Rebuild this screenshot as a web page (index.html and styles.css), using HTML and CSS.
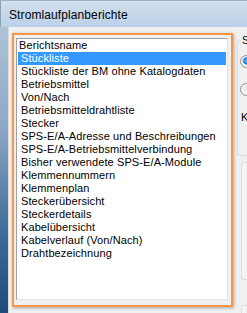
FILE: index.html
```html
<!DOCTYPE html>
<html>
<head>
<meta charset="utf-8">
<link rel="stylesheet" href="styles.css">
</head>
<body>
<div class="window">
  <div class="titlebar">Stromlaufplanberichte</div>
  <div class="client">
    <div class="highlight">
      <div class="listbox">
        <div class="header">Berichtsname</div>
        <ul class="items">
          <li class="selected">Stückliste</li>
          <li>Stückliste der BM ohne Katalogdaten</li>
          <li>Betriebsmittel</li>
          <li>Von/Nach</li>
          <li>Betriebsmitteldrahtliste</li>
          <li>Stecker</li>
          <li>SPS-E/A-Adresse und Beschreibungen</li>
          <li>SPS-E/A-Betriebsmittelverbindung</li>
          <li>Bisher verwendete SPS-E/A-Module</li>
          <li>Klemmennummern</li>
          <li>Klemmenplan</li>
          <li>Steckerübersicht</li>
          <li>Steckerdetails</li>
          <li>Kabelübersicht</li>
          <li>Kabelverlauf (Von/Nach)</li>
          <li>Drahtbezeichnung</li>
        </ul>
      </div>
    </div>
    <div class="side">
      <div class="group">
        <span class="legend">S</span>
        <span class="radio checked"></span>
        <span class="radio"></span>
        <span class="label">K</span>
      </div>
      <div class="box"></div>
      <div class="box"></div>
    </div>
  </div>
</div>
</body>
</html>
```

FILE: styles.css
```css
* { box-sizing: border-box; }
html, body { margin: 0; padding: 0; }
body {
  width: 247px;
  height: 313px;
  overflow: hidden;
  font-family: "Liberation Sans", Arial, sans-serif;
}
.window {
  width: 247px;
  height: 313px;
  display: flex;
  flex-direction: column;
  background: linear-gradient(to bottom, #b9c9da 0%, #8fa9c5 40%, #3d6a96 75%, #1f4b78 100%);
}
.titlebar {
  height: 27px;
  padding: 8px 0 0 8px;
  font-size: 12px;
  line-height: 13px;
  letter-spacing: 0.1px;
  color: #000;
  background: linear-gradient(to bottom, #d3e0ee 0%, #c3d6ea 60%, #bcd1e8 100%);
  border-top: 1px solid #9fb1c4;
  border-left: 1px solid #8ea2b6;
}
.client {
  flex: 1;
  margin-left: 8px;
  background: #f0f0f0;
  display: flex;
  align-items: flex-start;
  padding: 6px 0 0 3px;
  border-left: 1px solid #d9dde3;
  overflow: hidden;
}
.highlight {
  flex: none;
  width: 221px;
  height: 274px;
  border: 2px solid #f79646;
  padding: 3px 0 0 2px;
  box-shadow: 1px 1px 3px rgba(0,0,0,0.3);
}
.listbox {
  width: 212px;
  height: 262px;
  border: 1px solid #a0a0a0;
  border-right-color: #e3e3e3;
  border-bottom-color: #e3e3e3;
  background: #fff;
  font-size: 11px;
  line-height: 13px;
  letter-spacing: 0.1px;
  color: #000;
  padding: 0 1px;
}
.header {
  height: 13px;
  padding-left: 1px;
}
.items {
  list-style: none;
  margin: 0;
  padding: 0;
}
.items li {
  height: 13px;
  padding-left: 3px;
  white-space: nowrap;
}
.items li.selected {
  background: #3399ff;
  color: #fff;
}
.side {
  flex: 1;
  display: flex;
  flex-direction: column;
  padding: 7px 0 0 4px;
}
.group {
  position: relative;
  height: 116px;
  border: 1px solid #d5dfe5;
  border-right: none;
  border-radius: 3px 0 0 3px;
  display: flex;
  flex-direction: column;
  padding: 14px 0 0 2px;
  font-size: 11px;
}
.legend {
  position: absolute;
  top: -7px;
  left: 3px;
  background: #f0f0f0;
  line-height: 12px;
  padding: 0 1px;
}
.radio {
  width: 13px;
  height: 13px;
  border-radius: 50%;
  border: 1px solid #8e8f8f;
  background: radial-gradient(circle at 50% 50%, #e6e6e6 0%, #f4f4f4 60%, #fff 100%);
  margin-bottom: 15px;
}
.radio.checked {
  background: radial-gradient(circle at 50% 45%, #6fcbff 0%, #1b7bd0 35%, #eef 50%, #f6f6f6 100%);
}
.label {
  line-height: 12px;
  padding-left: 1px;
}
.box {
  margin-top: 6px;
  margin-left: 4px;
  height: 118px;
  border: 1px solid #dcdcdc;
  border-right: none;
  border-radius: 3px 0 0 3px;
  background: #f4f4f4;
}
.box + .box {
  margin-top: 25px;
}
```
